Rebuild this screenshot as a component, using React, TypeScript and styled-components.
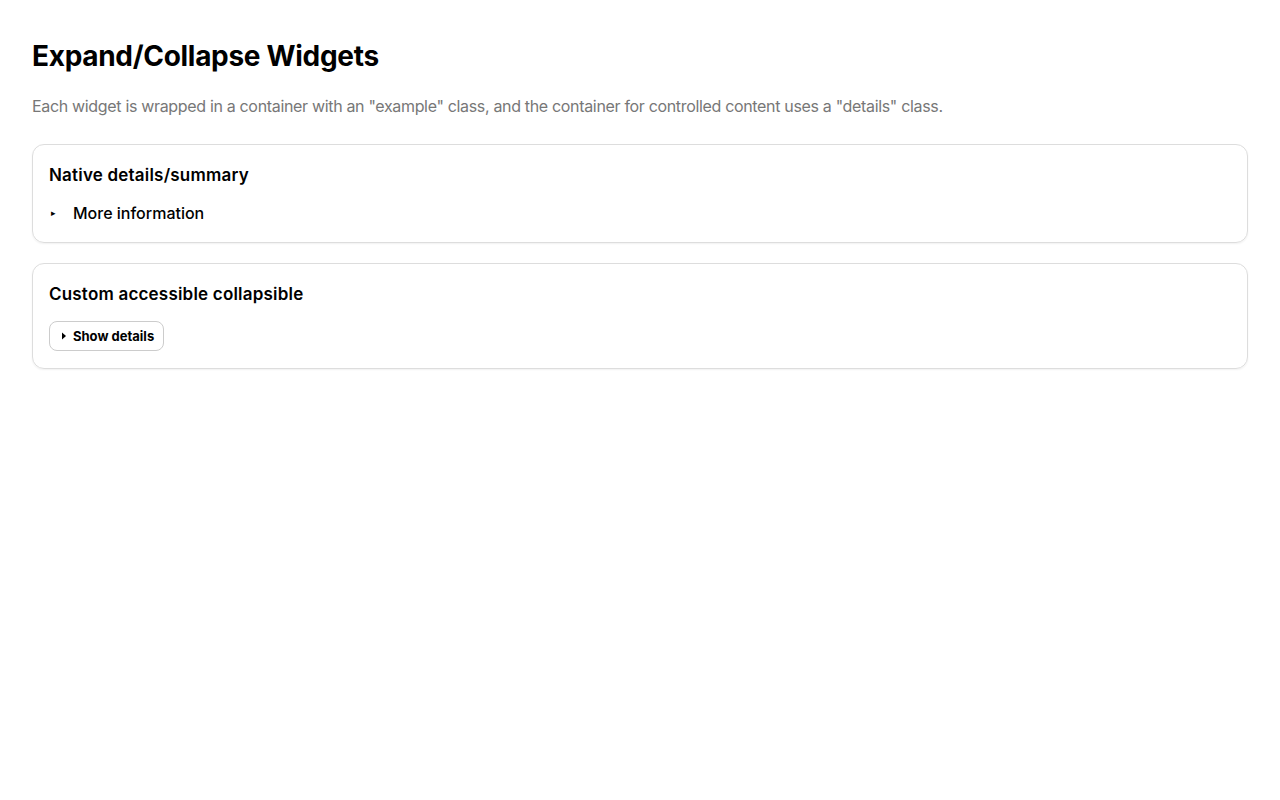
import styled, { createGlobalStyle } from "styled-components";

const GlobalStyle = createGlobalStyle`
    body {
        margin: 0;
        background: #fff;
        color: #000;
        font-family: Inter, "Liberation Sans", Arial, sans-serif;
    }
`;

const Page = styled.main`
    padding: 32px;
`;

const Title = styled.h1`
    margin: 7px 0 0;
    font-size: 28px;
    line-height: 34px;
    font-weight: 700;
    letter-spacing: -0.3px;
`;

const Lead = styled.p`
    margin: 21px 0 26px;
    font-size: 16px;
    line-height: 24px;
    letter-spacing: -0.33px;
    color: #777;
`;

const Example = styled.section`
    border: 1px solid #ddd;
    border-radius: 12px;
    padding: 16px 16px 17px;
    box-shadow: 0 1px 2px rgba(0, 0, 0, 0.06);
    & + & {
        margin-top: 20px;
    }
`;

const ExampleTitle = styled.h2`
    margin: 0 0 12px;
    font-size: 17px;
    line-height: 28px;
    font-weight: 600;
    letter-spacing: 0.2px;
`;

const Summary = styled.summary`
    list-style: none;
    display: flex;
    align-items: center;
    font-size: 16px;
    line-height: 24px;
    font-weight: 500;
    cursor: pointer;
    &::-webkit-details-marker {
        display: none;
    }
`;

const Marker = styled.span`
    width: 24px;
    font-size: 9px;
    padding-left: 2px;
    box-sizing: border-box;
`;

const Details = styled.details`
    margin: 0;
`;

const Toggle = styled.button`
    display: inline-flex;
    align-items: center;
    gap: 6px;
    height: 30px;
    margin-top: 1px;
    padding: 0 9px 0 11px;
    border: 1px solid #ccc;
    border-radius: 8px;
    background: #fff;
    font-family: inherit;
    font-size: 13px;
    font-weight: 700;
    color: #000;
    cursor: pointer;
`;

const Caret = styled.svg`
    width: 6px;
    height: 8px;
`;

export default function App() {
    return (
        <>
            <GlobalStyle />
            <Page>
                <Title>Expand/Collapse Widgets</Title>
                <Lead>
                    Each widget is wrapped in a container with an "example" class, and the
                    container for controlled content uses a "details" class.
                </Lead>
                <Example className="example">
                    <ExampleTitle>Native details/summary</ExampleTitle>
                    <Details>
                        <Summary>
                            <Marker>▸</Marker>
                            More information
                        </Summary>
                    </Details>
                </Example>
                <Example className="example">
                    <ExampleTitle>Custom accessible collapsible</ExampleTitle>
                    <Toggle aria-expanded={false}>
                        <Caret viewBox="0 0 6 8">
                            <path d="M1 0.5 L5 4 L1 7.5 Z" fill="#000" />
                        </Caret>
                        Show details
                    </Toggle>
                </Example>
            </Page>
        </>
    );
}
